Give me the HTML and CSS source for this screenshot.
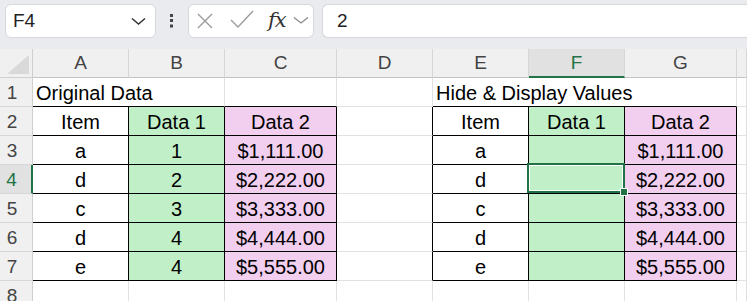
FILE: index.html
```html
<!DOCTYPE html>
<html lang="en">
<head>
    <meta charset="UTF-8">
    <title>Hide &amp; Display Values</title>
    <link rel="stylesheet" href="styles.css">
</head>
<body>
    <div class="toolbar">
        <div class="namebox">
            <span>F4</span>
            <svg width="15" height="8" viewBox="0 0 15 8"><path d="M1 1.5 L7.5 7 L14 1.5" fill="none" stroke="#333" stroke-width="1.5"/></svg>
        </div>
        <div class="dots">
            <svg width="32" height="34" viewBox="0 0 32 34"><rect x="14" y="10" width="3" height="3" fill="#444"/><rect x="14" y="15" width="3" height="3" fill="#444"/><rect x="14" y="20.5" width="3" height="3" fill="#444"/></svg>
        </div>
        <div class="fxbox">
            <svg class="ico-x" width="16" height="16" viewBox="0 0 16 16"><path d="M1 1 L15 15 M15 1 L1 15" fill="none" stroke="#9b9b9b" stroke-width="1.4"/></svg>
            <svg class="ico-check" width="24" height="18" viewBox="0 0 24 18"><path d="M1 10 L8 17 L23 1" fill="none" stroke="#9b9b9b" stroke-width="1.4"/></svg>
            <span class="fx">fx</span>
            <svg class="ico-chev" width="16" height="8" viewBox="0 0 16 8"><path d="M1 1.5 L8 7 L15 1.5" fill="none" stroke="#8a8a8a" stroke-width="1.3"/></svg>
        </div>
        <div class="formula">2</div>
    </div>

    <div class="sheet">
        <div class="corner"><svg width="22" height="19" viewBox="0 0 22 19"><polygon points="22,0 22,19 0,19" fill="#d9d9d9"/></svg></div>
        <div class="ch">A</div>
        <div class="ch">B</div>
        <div class="ch">C</div>
        <div class="ch">D</div>
        <div class="ch">E</div>
        <div class="ch sel">F</div>
        <div class="ch">G</div>
        <div class="ch"></div>

        <div class="rh">1</div>
        <div class="title span2 bb">Original Data</div>
        <div class="bb"></div>
        <div></div>
        <div class="title span3 bb">Hide &amp; Display Values</div>
        <div></div>

        <div class="rh">2</div>
        <div class="bx">Item</div>
        <div class="bx green">Data 1</div>
        <div class="bx pink">Data 2</div>
        <div class="br"></div>
        <div class="bx">Item</div>
        <div class="bx green">Data 1</div>
        <div class="bx pink">Data 2</div>
        <div></div>

        <div class="rh">3</div>
        <div class="bx">a</div>
        <div class="bx green">1</div>
        <div class="bx pink">$1,111.00</div>
        <div class="br"></div>
        <div class="bx">a</div>
        <div class="bx green"></div>
        <div class="bx pink">$1,111.00</div>
        <div></div>

        <div class="rh sel">4</div>
        <div class="bx">d</div>
        <div class="bx green">2</div>
        <div class="bx pink">$2,222.00</div>
        <div class="br"></div>
        <div class="bx">d</div>
        <div class="bx green active"></div>
        <div class="bx pink">$2,222.00</div>
        <div></div>

        <div class="rh">5</div>
        <div class="bx">c</div>
        <div class="bx green">3</div>
        <div class="bx pink">$3,333.00</div>
        <div class="br"></div>
        <div class="bx">c</div>
        <div class="bx green"></div>
        <div class="bx pink">$3,333.00</div>
        <div></div>

        <div class="rh">6</div>
        <div class="bx">d</div>
        <div class="bx green">4</div>
        <div class="bx pink">$4,444.00</div>
        <div class="br"></div>
        <div class="bx">d</div>
        <div class="bx green"></div>
        <div class="bx pink">$4,444.00</div>
        <div></div>

        <div class="rh">7</div>
        <div class="bx">e</div>
        <div class="bx green">4</div>
        <div class="bx pink">$5,555.00</div>
        <div class="br"></div>
        <div class="bx">e</div>
        <div class="bx green"></div>
        <div class="bx pink">$5,555.00</div>
        <div></div>

        <div class="rh">8</div>
        <div></div>
        <div></div>
        <div></div>
        <div></div>
        <div></div>
        <div></div>
        <div></div>
        <div></div>
    </div>
</body>
</html>
```

FILE: styles.css
```css
body {
    margin: 0;
    background: #fff;
    overflow: hidden;
    font-family: "Liberation Sans", Arial, sans-serif;
}
.toolbar {
    height: 49px;
    box-sizing: border-box;
    background: #e9ebee;
    display: flex;
    align-items: flex-start;
    padding: 4px 0 0 5px;
}
.namebox {
    width: 151px;
    height: 34px;
    box-sizing: border-box;
    background: #fff;
    border: 1px solid #d6d8db;
    border-radius: 6px;
    display: flex;
    align-items: center;
    justify-content: space-between;
    padding: 0 9px 0 7px;
    font-size: 19px;
    color: #222;
}
.dots {
    width: 32px;
    height: 34px;
}
.fxbox {
    width: 126px;
    height: 34px;
    box-sizing: border-box;
    background: #fff;
    border: 1px solid #d6d8db;
    border-radius: 6px;
    display: flex;
    align-items: center;
    margin-right: 8px;
}
.ico-x {
    margin-left: 8px;
}
.ico-check {
    margin-left: 17px;
    margin-top: -4px;
}
.fx {
    margin-left: 14px;
    font-family: "DejaVu Serif", "Liberation Serif", serif;
    font-style: italic;
    font-size: 21px;
    color: #333;
    margin-top: -3px;
    letter-spacing: -1px;
}
.ico-chev {
    margin-left: 7px;
    margin-top: -3px;
}
.formula {
    flex: 1;
    height: 34px;
    box-sizing: border-box;
    background: #fff;
    border: 1px solid #d6d8db;
    border-right: none;
    border-radius: 6px 0 0 6px;
    display: flex;
    align-items: center;
    padding-left: 14px;
    font-size: 19px;
    color: #222;
}
.sheet {
    display: grid;
    grid-template-columns: 33px 96px 96px 112px 96px 96px 96px 112px 1fr;
    grid-auto-rows: 29px;
    font-size: 20px;
    color: #000;
}
.sheet > div {
    box-sizing: border-box;
    border-right: 1px solid #e1e1e1;
    border-bottom: 1px solid #e1e1e1;
    display: flex;
    align-items: flex-end;
    justify-content: center;
    padding-bottom: 2px;
    line-height: 22px;
    white-space: nowrap;
}
.sheet > .corner {
    background: #f0f0f0;
    border-color: #cfcfcf;
    align-items: flex-end;
    justify-content: flex-end;
    padding: 0 3px 3px 0;
}
.sheet > .ch {
    background: #f0f0f0;
    border-right-color: #d6d6d6;
    border-bottom-color: #c4c4c4;
    color: #444;
    font-size: 19px;
    align-items: center;
    padding-bottom: 0;
}
.sheet > .ch.sel {
    background: #e1e1e1;
    border-bottom: 2px solid #217346;
    color: #217346;
}
.sheet > .rh {
    background: #f0f0f0;
    border-right-color: #cfcfcf;
    border-bottom-color: #d6d6d6;
    color: #444;
    font-size: 19px;
    padding-right: 8px;
}
.sheet > .rh.sel {
    background: #e1e1e1;
    border-right: 2px solid #217346;
    color: #217346;
}
.sheet > .title {
    justify-content: flex-start;
    padding-left: 3px;
}
.span2 {
    grid-column: span 2;
}
.span3 {
    grid-column: span 3;
}
.sheet > .bb {
    border-bottom-color: #000;
}
.sheet > .br {
    border-right-color: #000;
}
.sheet > .bx {
    border-right-color: #000;
    border-bottom-color: #000;
}
.green {
    background: #c1f0c8;
}
.pink {
    background: #f2ceef;
}
.active {
    position: relative;
}
.active::after {
    content: "";
    position: absolute;
    left: -2px;
    top: -2px;
    right: -1px;
    bottom: 0;
    border: 2px solid #217346;
    box-shadow: inset 0 0 0 1px #fff;
    z-index: 2;
}
.active::before {
    content: "";
    position: absolute;
    right: -3px;
    bottom: -2px;
    width: 6px;
    height: 6px;
    background: #217346;
    outline: 1px solid #fff;
    z-index: 3;
}
```
